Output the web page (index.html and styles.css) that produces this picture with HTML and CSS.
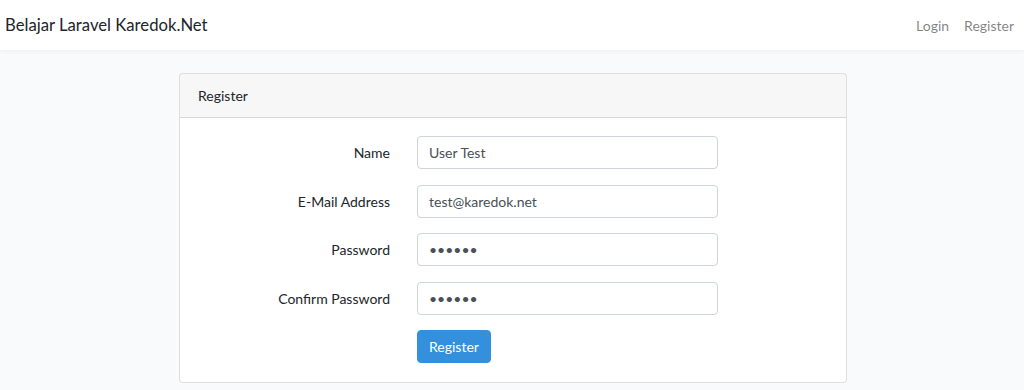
FILE: index.html
```html
<!DOCTYPE html>
<html lang="en">
<head>
  <meta charset="UTF-8">
  <meta name="viewport" content="width=device-width, initial-scale=1.0">
  <title>Register - Belajar Laravel Karedok.Net</title>
  <link rel="stylesheet" href="styles.css">
</head>
<body>

  <nav class="navbar">
    <a class="brand" href="#">Belajar Laravel Karedok.Net</a>
    <div class="nav-links">
      <a href="#">Login</a>
      <a href="#">Register</a>
    </div>
  </nav>

  <main class="page">
    <div class="card">
      <div class="card-header">Register</div>
      <form class="card-body">
        <div class="form-row">
          <label for="name">Name</label>
          <input id="name" type="text" class="form-control" value="User Test">
        </div>
        <div class="form-row">
          <label for="email">E-Mail Address</label>
          <input id="email" type="email" class="form-control" value="test@karedok.net">
        </div>
        <div class="form-row">
          <label for="password">Password</label>
          <input id="password" type="password" class="form-control" value="secret">
        </div>
        <div class="form-row">
          <label for="password-confirm">Confirm Password</label>
          <input id="password-confirm" type="password" class="form-control" value="secret">
        </div>
        <div class="form-row last">
          <span class="spacer"></span>
          <button type="submit" class="btn-primary">Register</button>
        </div>
      </form>
    </div>
  </main>

</body>
</html>
```

FILE: styles.css
```css
* {
  margin: 0;
  padding: 0;
  box-sizing: border-box;
}

body {
  font-family: Lato, 'Open Sans', sans-serif;
  font-size: 14px;
  color: #212529;
  background-color: #f8fafc;
}

.navbar {
  height: 50px;
  background: #fff;
  box-shadow: 0 2px 4px rgba(0, 0, 0, 0.04);
  display: flex;
  align-items: center;
  justify-content: space-between;
  padding: 0 10px 0 5px;
}

.brand {
  color: #212529;
  font-size: 16.7px;
  text-decoration: none;
}

.nav-links {
  display: flex;
  gap: 15px;
}

.nav-links a {
  color: rgba(0, 0, 0, 0.5);
  font-size: 14px;
  text-decoration: none;
}

.page {
  padding: 23px 0 0 2px;
}

.card {
  width: 668px;
  margin: 0 auto;
  background: #fff;
  border: 1px solid rgba(0, 0, 0, 0.125);
  border-radius: 4px;
}

.card-header {
  height: 44px;
  line-height: 43px;
  padding: 0 18px;
  background: rgba(0, 0, 0, 0.03);
  border-bottom: 1px solid rgba(0, 0, 0, 0.125);
}

.card-body {
  padding: 18px 0 19px;
}

.form-row {
  display: flex;
  align-items: center;
  margin-bottom: 15.5px;
}

.form-row.last {
  margin-bottom: 0;
}

.form-row label,
.form-row .spacer {
  width: 210px;
  text-align: right;
  margin-right: 27px;
}

.form-control {
  width: 301px;
  height: 33px;
  padding: 0 11px;
  font-family: inherit;
  font-size: 14px;
  color: #495057;
  background: #fff;
  border: 1px solid #ced4da;
  border-radius: 4px;
}

.btn-primary {
  height: 33px;
  padding: 0 11px;
  font-family: inherit;
  font-size: 14px;
  color: #fff;
  background: #3490dc;
  border: 1px solid #3490dc;
  border-radius: 4px;
  cursor: pointer;
}
```
